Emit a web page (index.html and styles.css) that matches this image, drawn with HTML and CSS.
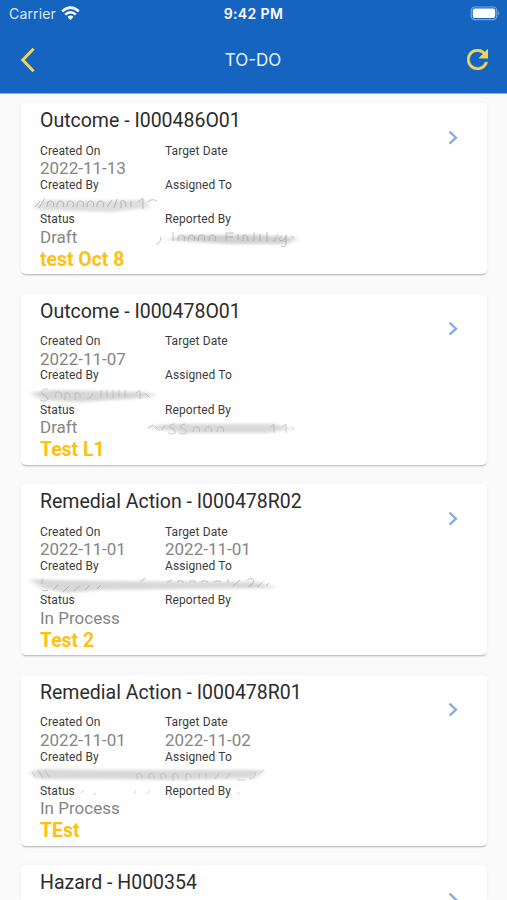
FILE: index.html
```html
<!DOCTYPE html>
<html lang="en">
<head>
    <meta charset="UTF-8">
    <title>To-Do</title>
    <link rel="stylesheet" href="styles.css">
</head>
<body>
    <svg class="defs" width="0" height="0">
        <filter id="soft" x="-10%" y="-60%" width="120%" height="220%">
            <feGaussianBlur stdDeviation="3 1.6"/>
        </filter>
        <filter id="line" x="-10%" y="-60%" width="120%" height="220%">
            <feGaussianBlur stdDeviation="0.7"/>
        </filter>
        <symbol id="chevron" viewBox="0 0 10 16">
            <path d="M1.5 1.7 L8 7.7 L1.5 13.7" fill="none" stroke="#8baae6" stroke-width="2.4"/>
        </symbol>
    </svg>

    <header class="header">
        <div class="status-bar">
            <div class="carrier">
                <span>Carrier</span>
                <svg width="19" height="15" viewBox="0 0 19 15" fill="none" stroke="#fff" stroke-width="2.5">
                    <path d="M1.2 5.4 Q9.5 -2.2 17.8 5.4"/>
                    <path d="M4.2 8.7 Q9.5 3.8 14.8 8.7"/>
                    <path d="M6.5 10.8 Q9.5 8.2 12.5 10.8 L9.5 14 Z" fill="#fff" stroke="none"/>
                </svg>
            </div>
            <div class="time">9:42 PM</div>
            <div class="battery">
                <svg width="31" height="15" viewBox="0 0 31 15">
                    <rect x="1.2" y="1" width="25.6" height="12.6" rx="3.6" fill="none" stroke="#78a6dc" stroke-width="1.2"/>
                    <rect x="2.8" y="2.6" width="22.4" height="9.4" rx="2" fill="#fff"/>
                    <path d="M28.3 5 Q30.4 7.3 28.3 9.6 Z" fill="#78a6dc"/>
                </svg>
            </div>
        </div>
        <div class="nav-bar">
            <svg class="back" width="18" height="26" viewBox="0 0 18 26" fill="none" stroke="#f2d458" stroke-width="3">
                <path d="M15.6 1.8 L4.8 13 L15.6 24.2"/>
            </svg>
            <h1>TO-DO</h1>
            <svg class="refresh" width="21" height="21" viewBox="4 4 16 16">
                <path d="M17.65 6.35C16.2 4.9 14.21 4 12 4c-4.42 0-7.99 3.58-7.99 8s3.57 8 7.99 8c3.73 0 6.84-2.55 7.73-6h-2.08c-.82 2.33-3.04 4-5.65 4-3.31 0-6-2.69-6-6s2.69-6 6-6c1.66 0 3.14.69 4.22 1.78L13 11h7V4l-2.35 2.35z" fill="#f2d458" stroke="#f2d458" stroke-width=".3"/>
            </svg>
        </div>
    </header>

    <main class="list">
        <section class="card">
            <h2>Outcome - I000486O01</h2>
            <svg class="arrow"><use href="#chevron"/></svg>
            <dl class="fields">
                <div><dt>Created On</dt><dd>2022-11-13</dd></div>
                <div><dt>Target Date</dt><dd></dd></div>
                <div><dt>Created By</dt><dd></dd></div>
                <div><dt>Assigned To</dt><dd></dd></div>
                <div><dt>Status</dt><dd>Draft</dd></div>
                <div><dt>Reported By</dt><dd></dd></div>
            </dl>
            <p class="note">test Oct 8</p>
            <svg class="smudge" viewBox="0 0 466 171">
                <path d="M13 104 L22 97 L60 98 L126 97 L127 105 L90 109 L20 107 Z" fill="#dedede" filter="url(#soft)"/>
                <path d="M145 137 L165 132 L240 132 L277 135 L265 141 L210 141 Z" fill="#d0d0d0" filter="url(#soft)"/>
                <g fill="none" stroke="#999" stroke-width="1" opacity=".6" filter="url(#line)">
                    <path d="M14 104 l5 -6 M18 105 l6 -10 M26 104 q0 -7 4 -6 t2 6 M36 104 q0 -7 4 -6 t2 6 M46 104 q0 -7 4 -6 t2 6 M56 104 q0 -7 4 -6 t2 6 M66 104 q0 -7 4 -6 t2 6 M76 104 q0 -7 4 -6 t2 6 M86 104 l5 -7 M93 105 l3 -9 M100 105 v-7 q5 -2 5 6 M110 104 v-6 M117 99 l5 -4 v11 M127 99 q4 -4 9 -1"/>
                    <path d="M135 141 q4 1 5 -7 M152 138 v-9 M157 138 q0 -7 4 -6 t2 6 M167 138 q0 -7 4 -6 t2 6 M177 138 q0 -7 4 -6 t2 6 M188 138 q0 -7 4 -6 t2 6 M205 138 v-8 h8 M205 134 h7 M217 137 v-6 M222 138 v-6 q5 -1 5 6 M233 138 v-9 M239 138 v-7 M246 138 v-9 M253 138 l4 -7 M261 133 q-5 2 -1 5 q5 -1 5 -6 v9 q0 4 -5 2 M270 133 l3 2"/>
                </g>
            </svg>
        </section>

        <section class="card">
            <h2>Outcome - I000478O01</h2>
            <svg class="arrow"><use href="#chevron"/></svg>
            <dl class="fields">
                <div><dt>Created On</dt><dd>2022-11-07</dd></div>
                <div><dt>Target Date</dt><dd></dd></div>
                <div><dt>Created By</dt><dd></dd></div>
                <div><dt>Assigned To</dt><dd></dd></div>
                <div><dt>Status</dt><dd>Draft</dd></div>
                <div><dt>Reported By</dt><dd></dd></div>
            </dl>
            <p class="note">Test L1</p>
            <svg class="smudge" viewBox="0 0 466 171">
                <path d="M9 99 L30 96 L120 98 L136 101 L122 104 L60 108 L22 106 Z" fill="#d6d6d6" filter="url(#soft)"/>
                <path d="M122 133 L150 130 L255 130 L270 135 L245 139 L165 139 Z" fill="#d8d8d8" filter="url(#soft)"/>
                <g fill="none" stroke="#aaa" stroke-width="1" opacity=".6" filter="url(#line)">
                    <path d="M27 95 q-8 0 -6 5 q5 1 6 5 q-2 4 -8 1 M34 104 q0 -7 4 -6 t2 6 M44 106 v-7 q6 -1 5 5 M54 106 v-7 q6 -1 5 5 M66 105 q5 -1 6 -6 M80 103 v-7 M86 103 v-7 M92 104 v-8 M98 103 v-7 M104 103 v-7 M115 99 l4 -3 v9 M124 99 l5 5"/>
                    <path d="M127 134 l5 -3 M134 132 l5 5 M144 131 l-4 6 M154 130 q-7 0 -5 4 q6 1 5 5 q-3 2 -7 0 M165 130 q-7 0 -5 4 q6 1 5 5 q-3 2 -7 0 M172 138 q0 -6 4 -5 t2 5 M184 138 q0 -6 4 -5 t2 5 M196 138 q0 -6 4 -5 t2 5 M249 133 l4 -3 v9 M261 133 l4 -3 v9 M270 133 l3 3"/>
                </g>
            </svg>
        </section>

        <section class="card">
            <h2>Remedial Action - I000478R02</h2>
            <svg class="arrow"><use href="#chevron"/></svg>
            <dl class="fields">
                <div><dt>Created On</dt><dd>2022-11-01</dd></div>
                <div><dt>Target Date</dt><dd>2022-11-01</dd></div>
                <div><dt>Created By</dt><dd></dd></div>
                <div><dt>Assigned To</dt><dd></dd></div>
                <div><dt>Status</dt><dd>In Process</dd></div>
                <div><dt>Reported By</dt><dd></dd></div>
            </dl>
            <p class="note">Test 2</p>
            <svg class="smudge" viewBox="0 0 466 171">
                <path d="M9 95 L40 96 L90 97 L235 98 L256 104 L160 105 L80 106 L45 109 L20 104 Z" fill="#d8d8d8" filter="url(#soft)"/>
                <g fill="none" stroke="#999" stroke-width="1" opacity=".6" filter="url(#line)">
                    <path d="M22 95 q-2 2 -1 5 M21 106 q3 2 6 0 M32 106 l5 -5 M42 108 l6 -6 M53 107 l6 -5 M64 106 l5 -5 M76 105 l4 -4 M120 97 l5 -3 M146 98 l5 -2 M156 98 q3 -3 7 0 M168 98 q3 -3 7 0 M180 98 q3 -3 7 0 M193 98 q3 -3 7 0 M207 99 v-4 M212 102 l7 -6 M226 97 q4 -5 7 0 q-1 4 -6 6 M236 103 l6 -5 M245 102 l3 -3"/>
                </g>
            </svg>
        </section>

        <section class="card">
            <h2>Remedial Action - I000478R01</h2>
            <svg class="arrow"><use href="#chevron"/></svg>
            <dl class="fields">
                <div><dt>Created On</dt><dd>2022-11-01</dd></div>
                <div><dt>Target Date</dt><dd>2022-11-02</dd></div>
                <div><dt>Created By</dt><dd></dd></div>
                <div><dt>Assigned To</dt><dd></dd></div>
                <div><dt>Status</dt><dd>In Process</dd></div>
                <div><dt>Reported By</dt><dd></dd></div>
            </dl>
            <p class="note">TEst</p>
            <svg class="smudge" viewBox="0 0 466 171">
                <path d="M9 98 L18 94 L70 95 L243 95 L234 103 L150 105 L90 104 L18 104 Z" fill="#d8d8d8" filter="url(#soft)"/>
                <g fill="none" stroke="#aaa" stroke-width="1" opacity=".55" filter="url(#line)">
                    <path d="M11 97 l4 6 M17 95 l5 8 M24 95 l4 7 M116 104 v-5 q5 -2 5 4 M128 104 v-5 q5 -2 5 4 M140 104 v-5 q5 -2 5 4 M152 106 v-7 q6 -1 5 4 M165 106 v-7 q6 -1 5 4 M178 104 v-6 M185 104 v-6 M194 104 l4 -6 M205 104 l4 -6 M216 105 h8 M228 104 q8 -1 6 -7 M238 99 l5 -4 M60 118 l3 -3 M73 120 l2 -2 M113 119 l2 -3 M125 119 l4 -3 M216 117 l3 2"/>
                </g>
            </svg>
        </section>

        <section class="card">
            <h2>Hazard - H000354</h2>
            <svg class="arrow"><use href="#chevron"/></svg>
        </section>
    </main>
</body>
</html>
```
FILE: styles.css
```css
* {
    box-sizing: border-box;
}

body {
    margin: 0;
    height: 900px;
    overflow: hidden;
    background: #fafafa;
    font-family: Roboto, "Liberation Sans", sans-serif;
    color: #2c2c2c;
}

.defs {
    position: absolute;
}

.header {
    height: 94px;
    background: #1565c0;
    border-bottom: 1px solid #84abd9;
    color: #fff;
}

.status-bar {
    display: grid;
    grid-template-columns: 1fr auto 1fr;
    align-items: center;
    height: 27px;
    padding: 0 6px 0 9px;
    font-family: Inter, sans-serif;
    font-size: 14px;
}

.carrier {
    display: flex;
    align-items: center;
    gap: 5px;
    color: #dce9f8;
    letter-spacing: 0.15px;
}

.time {
    margin-left: -3px;
    font-weight: 600;
    letter-spacing: 0.4px;
}

.battery {
    display: flex;
    justify-content: flex-end;
}

.nav-bar {
    display: grid;
    grid-template-columns: 1fr auto 1fr;
    align-items: center;
    height: 65px;
    padding: 0 19px 0 18px;
}

.nav-bar h1 {
    margin: 0;
    font-family: Inter, sans-serif;
    font-size: 17px;
    font-weight: 400;
    color: #e8f1fb;
}

.refresh {
    justify-self: end;
}

.list {
    display: flex;
    flex-direction: column;
    gap: 19.6px;
    padding: 9px 20px 0 21px;
}

.card {
    position: relative;
    display: grid;
    grid-template-columns: 1fr 10px;
    grid-template-rows: 34px auto auto;
    flex-shrink: 0;
    height: 171px;
    padding: 0 29px 0 19px;
    background: #fff;
    border-radius: 5px;
    box-shadow: 0 2px 2px -1px rgba(0, 0, 0, 0.28), 0 0 4px rgba(0, 0, 0, 0.04);
}

.card:last-child {
    height: 35px;
    border-radius: 5px 5px 0 0;
    overflow: hidden;
}

.card h2 {
    margin: 0;
    font-size: 19.5px;
    font-weight: 400;
    line-height: 36px;
}

.arrow {
    grid-column: 2;
    grid-row: 1 / 3;
    width: 10px;
    height: 16px;
    margin-top: 27px;
}

.fields {
    display: grid;
    grid-column: 1;
    grid-template-columns: 125px 1fr;
    grid-auto-rows: 34.3px;
    margin: 6.6px 0 0;
}

.fields dt {
    height: 14.5px;
    font-size: 12px;
    line-height: 15px;
    letter-spacing: 0.1px;
    color: #3c3c3c;
}

.fields dd {
    margin: 0;
    font-size: 17px;
    line-height: 20.4px;
    color: #858585;
}

.note {
    margin: -1.4px 0 0;
    font-size: 19.4px;
    font-weight: 700;
    line-height: 22px;
    color: #ffc010;
}

/* scribbled-out names */
.smudge {
    position: absolute;
    top: 0;
    left: 0;
    width: 466px;
    height: 171px;
    pointer-events: none;
}
```
